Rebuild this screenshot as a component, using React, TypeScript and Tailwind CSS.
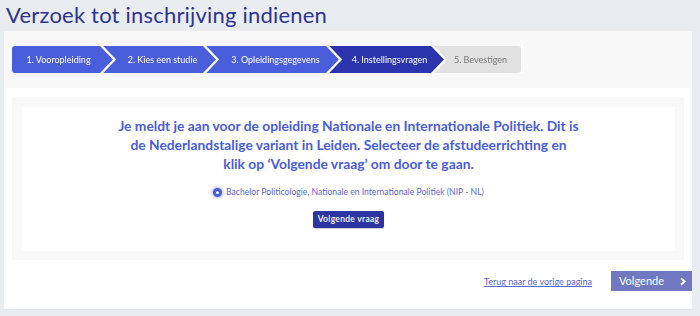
import React from "react";

const steps = [
  { label: "1. Vooropleiding", w: "w-[101px]", tone: "done" },
  { label: "2. Kies een studie", w: "w-[113px]", tone: "done" },
  { label: "3. Opleidingsgegevens", w: "w-[133px]", tone: "done" },
  { label: "4. Instellingsvragen", w: "w-[115px]", tone: "active" },
  { label: "5. Bevestigen", w: "w-[87px]", tone: "todo" },
];

function Stepper() {
  return (
    <div className="flex h-[27px]">
      {steps.map((s, i) => {
        const first = i === 0;
        const last = i === steps.length - 1;
        const shape = first
          ? "[clip-path:polygon(0_0,calc(100%-13px)_0,100%_50%,calc(100%-13px)_100%,0_100%)] rounded-l-[3px]"
          : last
          ? "[clip-path:polygon(0_0,100%_0,100%_100%,0_100%,13px_50%)] rounded-r-[3px]"
          : "[clip-path:polygon(0_0,calc(100%-13px)_0,100%_50%,calc(100%-13px)_100%,0_100%,13px_50%)]";
        const colour =
          s.tone === "done"
            ? "bg-[#4a5ddb] text-white"
            : s.tone === "active"
            ? "bg-[#2b34ad] text-white"
            : "bg-[#e1e1e1] text-[#7a7a7a]";
        return (
          <div
            key={s.label}
            className={`${first ? "" : "-ml-[10px]"} [filter:drop-shadow(3px_0_0_#ffffff)]`}
            style={{ zIndex: steps.length - i }}
          >
            <div
              className={`${s.w} ${shape} ${colour} h-full flex items-center justify-center ${first ? "pr-[8px]" : "pl-[6px]"} text-[9px]`}
            >
              {s.label}
            </div>
          </div>
        );
      })}
    </div>
  );
}

export default function App() {
  return (
    <div className="w-[700px] h-[316px] bg-[#e9edf2] overflow-hidden font-['Lato','Liberation_Sans',sans-serif]">
      <h1 className="h-[31px] pl-[6px] pt-[1px] text-[22px] leading-[28px] text-[#2d3491] tracking-[0.2px]">
        Verzoek tot inschrijving indienen
      </h1>

      <div className="ml-[4px] w-[688px] h-[278px] bg-white rounded-[2px] shadow-[0_1px_1px_rgba(0,0,0,0.04)] flex flex-col">
        {/* Stepper */}
        <div className="h-[57px] bg-[#f8f8f8] px-[8px] pt-[15px] rounded-t-[2px]">
          <Stepper />
        </div>

        {/* Question */}
        <div className="px-[8px] pt-[9px]">
          <div className="h-[163px] bg-[#f8f8f8] pl-[10px] pr-[9px] pt-[10px]">
            <div className="h-[144px] bg-white flex flex-col items-center pt-[9px]">
              <p className="text-center font-bold text-[13.8px] leading-[19px] text-[#4a5ddb]">
                Je meldt je aan voor de opleiding Nationale en Internationale Politiek. Dit is
                <br />
                de Nederlandstalige variant in Leiden. Selecteer de afstudeerrichting en
                <br />
                klik op ‘Volgende vraag’ om door te gaan.
              </p>
              <label className="mt-[13px] flex items-center gap-[4px] text-[8.6px] text-[#5d67d4]">
                <span className="w-[9px] h-[9px] rounded-full bg-[#4a5ddb] flex items-center justify-center shadow-[0_0_3px_1px_rgba(74,93,219,0.45)]">
                  <span className="w-[3px] h-[3px] rounded-full bg-white" />
                </span>
                Bachelor Politicologie, Nationale en Internationale Politiek (NIP - NL)
              </label>
              <button className="mt-[12px] h-[17px] px-[5px] rounded-[2px] bg-[#2c36a3] text-white text-[8.5px] font-semibold tracking-[0.3px] shadow-[0_1px_1px_rgba(0,0,0,0.2)]">
                Volgende vraag
              </button>
            </div>
          </div>
        </div>

        {/* Footer */}
        <div className="flex justify-end items-center gap-[19px] mt-[11px]">
          <a className="text-[9px] text-[#5a66d6] underline underline-offset-[1px] mt-[2px]" href="#">
            Terug naar de vorige pagina
          </a>
          <button className="w-[81px] h-[20px] bg-[#7078c2] text-white text-[11px] flex items-center justify-between pl-[8px] pr-[5px]">
            <span>Volgende</span>
            <svg width="8" height="9" viewBox="0 0 8 9" fill="none">
              <path d="M2 1.2 L5.6 4.5 L2 7.8" stroke="#ffffff" strokeWidth="2" />
            </svg>
          </button>
        </div>
      </div>
    </div>
  );
}
